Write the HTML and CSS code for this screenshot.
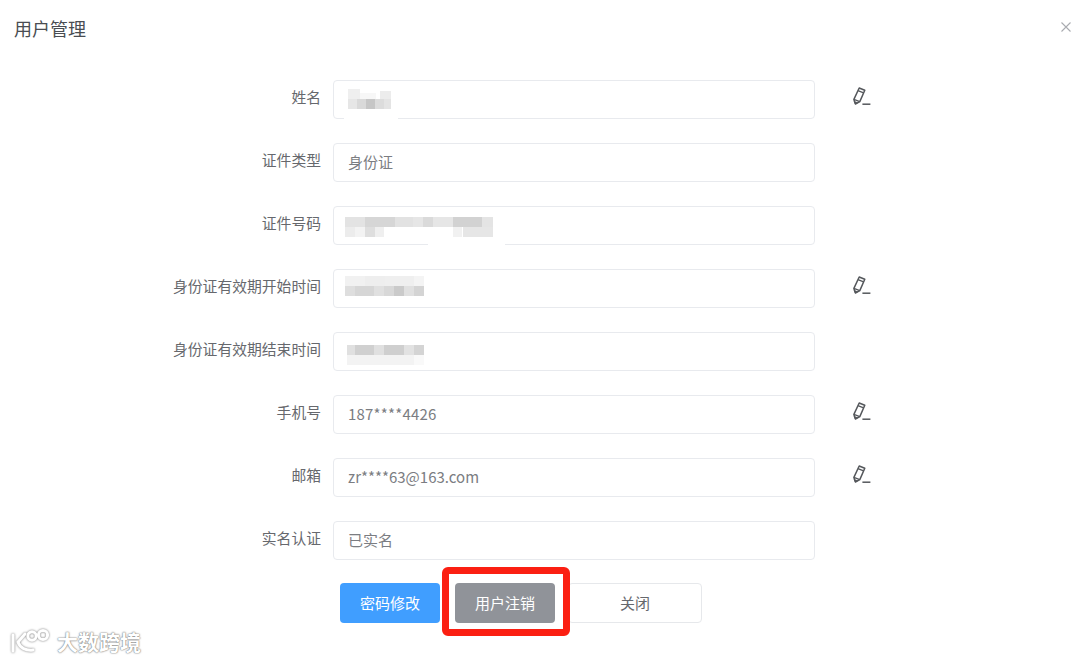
FILE: index.html
```html
<!DOCTYPE html>
<html lang="zh-CN">
<head>
  <meta charset="UTF-8">
  <meta name="viewport" content="width=device-width, initial-scale=1.0">
  <title>用户管理</title>
  <link rel="stylesheet" href="styles.css">
</head>
<body>
  <svg class="icon-defs" width="0" height="0">
    <symbol id="pencil" viewBox="0 0 18 19">
      <path d="M6.2 1 11.8 3.3 6.8 14.6 2.4 17 .9 12.4Z" fill="none" stroke="#55585c" stroke-width="1.5" stroke-linejoin="round"/>
      <path d="M5 3.6 10.6 5.9M.9 12.4 6.8 14.6" fill="none" stroke="#55585c" stroke-width="1.2"/>
      <path d="M1.2 14.6 2.4 17 4.6 15.8Z" fill="#55585c" stroke="#55585c" stroke-width=".8"/>
      <path d="M9.4 17.2h8" stroke="#55585c" stroke-width="1.5"/>
    </symbol>
  </svg>

  <div class="dialog">
    <div class="dialog-header">
      <span class="dialog-title">用户管理</span>
      <svg class="close" width="10" height="10" viewBox="0 0 10 10">
        <path d="M.5.5l9 9M9.5.5l-9 9" stroke="#a9abb0" stroke-width="1.1"/>
      </svg>
    </div>

    <div class="form">
      <div class="row">
        <label>姓名</label>
        <div class="field">
          <svg class="mosaic m-name" width="56" height="34" viewBox="0 0 56 34">
            <g fill="#efefef"><rect x="4" y="2" width="12" height="10"/><rect x="16" y="6" width="16" height="6" fill="#f7f7f7"/><rect x="36" y="4" width="11" height="8" fill="#ececec"/></g>
            <rect x="4" y="12" width="9" height="10" fill="#e6e6e6"/><rect x="13" y="12" width="9" height="10" fill="#d9d9d9"/><rect x="22" y="12" width="9" height="10" fill="#c6c6c6"/><rect x="31" y="12" width="9" height="10" fill="#dcdcdc"/><rect x="40" y="12" width="7" height="10" fill="#e4e4e4"/>
            <rect x="0" y="27" width="54" height="5" fill="#fff"/>
          </svg>
        </div>
        <svg class="edit" width="18" height="19"><use href="#pencil"/></svg>
      </div>
      <div class="row">
        <label>证件类型</label>
        <div class="field">身份证</div>
      </div>
      <div class="row">
        <label>证件号码</label>
        <div class="field">
          <svg class="mosaic m-id" width="164" height="34" viewBox="0 0 164 34">
            <rect x="0" y="0" width="20" height="10" fill="#e3e3e3"/><rect x="20" y="0" width="30" height="10" fill="#d6d6d6"/><rect x="50" y="0" width="18" height="10" fill="#e2e2e2"/><rect x="68" y="0" width="10" height="10" fill="#e6e6e6"/><rect x="78" y="0" width="10" height="10" fill="#dadada"/><rect x="88" y="0" width="20" height="10" fill="#e6e6e6"/><rect x="108" y="0" width="29" height="10" fill="#d2d2d2"/><rect x="137" y="0" width="11" height="10" fill="#e4e4e4"/>
            <rect x="0" y="10" width="10" height="10" fill="#ececec"/><rect x="10" y="10" width="10" height="10" fill="#f3f3f3"/><rect x="20" y="10" width="10" height="10" fill="#dedede"/><rect x="30" y="10" width="9" height="10" fill="#efefef"/><rect x="108" y="10" width="9" height="10" fill="#f1f1f1"/><rect x="118" y="10" width="30" height="10" fill="#e6e6e6"/>
            <rect x="83" y="27" width="77" height="4" fill="#fff"/>
          </svg>
        </div>
      </div>
      <div class="row">
        <label>身份证有效期开始时间</label>
        <div class="field">
          <svg class="mosaic m-start" width="80" height="20" viewBox="0 0 80 20">
            <rect x="0" y="0" width="20" height="10" fill="#f1f1f1"/><rect x="20" y="0" width="20" height="10" fill="#eeeeee"/><rect x="40" y="0" width="29" height="10" fill="#efefef"/><rect x="69" y="0" width="10" height="10" fill="#f4f4f4"/>
            <rect x="0" y="10" width="10" height="10" fill="#dedede"/><rect x="10" y="10" width="19" height="10" fill="#d6d6d6"/><rect x="29" y="10" width="10" height="10" fill="#e0e0e0"/><rect x="39" y="10" width="10" height="10" fill="#d8d8d8"/><rect x="49" y="10" width="10" height="10" fill="#cacaca"/><rect x="59" y="10" width="10" height="10" fill="#e0e0e0"/><rect x="69" y="10" width="10" height="10" fill="#d4d4d4"/>
          </svg>
        </div>
        <svg class="edit" width="18" height="19"><use href="#pencil"/></svg>
      </div>
      <div class="row">
        <label>身份证有效期结束时间</label>
        <div class="field">
          <svg class="mosaic m-end" width="78" height="20" viewBox="0 0 78 20">
            <rect x="0" y="0" width="8" height="10" fill="#e0e0e0"/><rect x="8" y="0" width="19" height="10" fill="#d0d0d0"/><rect x="27" y="0" width="10" height="10" fill="#e0e0e0"/><rect x="37" y="0" width="20" height="10" fill="#cfcfcf"/><rect x="57" y="0" width="10" height="10" fill="#e2e2e2"/><rect x="67" y="0" width="10" height="10" fill="#d4d4d4"/>
            <rect x="0" y="10" width="67" height="10" fill="#f3f3f3"/><rect x="67" y="10" width="10" height="10" fill="#f9f9f9"/>
          </svg>
        </div>
      </div>
      <div class="row">
        <label>手机号</label>
        <div class="field latin">187****4426</div>
        <svg class="edit" width="18" height="19"><use href="#pencil"/></svg>
      </div>
      <div class="row">
        <label>邮箱</label>
        <div class="field">zr****63@163.com</div>
        <svg class="edit" width="18" height="19"><use href="#pencil"/></svg>
      </div>
      <div class="row">
        <label>实名认证</label>
        <div class="field">已实名</div>
      </div>
    </div>

    <div class="actions">
      <button class="btn btn-primary">密码修改</button>
      <button class="btn btn-gray">用户注销</button>
      <button class="btn btn-close">关闭</button>
    </div>
  </div>

  <!-- 红框标注 -->
  <div class="highlight"></div>

  <!-- 水印 -->
  <div class="watermark">
    <svg width="46" height="26" viewBox="0 0 46 26">
      <g fill="none" stroke="#fff" stroke-width="3" stroke-linecap="round">
        <path d="M5 7v16"/>
        <path d="M17 6 10 14c2 6 8 9 15 8"/>
        <circle cx="24" cy="8" r="4.2"/>
        <circle cx="35" cy="7" r="4.6"/>
      </g>
    </svg>
    <span>大数跨境</span>
  </div>
</body>
</html>
```

FILE: styles.css
```css
* { box-sizing: border-box; }

body {
  margin: 0;
  background: #fff;
  color: #66686d;
  font-family: "Noto Sans CJK SC", "Noto Sans", sans-serif;
  font-size: 15px;
  height: 661px;
  overflow: hidden;
  position: relative;
}

.icon-defs { position: absolute; }

.dialog-header {
  height: 80px;
  padding: 15px 9px 0 14px;
  display: flex;
  justify-content: space-between;
  align-items: flex-start;
}
.dialog-title {
  font-size: 18px;
  line-height: 26px;
  color: #4a4d52;
}
.close { margin-top: 7px; }

.form {
  display: flex;
  flex-direction: column;
  gap: 24px;
}

.row {
  display: flex;
  align-items: center;
  height: 39px;
}
.row label {
  width: 321px;
  font-size: 14.8px;
  text-align: right;
  line-height: 20px;
  margin-top: -5px;
}

.field {
  position: relative;
  width: 481.5px;
  height: 39px;
  margin-left: 12px;
  padding-left: 14px;
  line-height: 36px;
  color: #7b7d82;
  border: 1px solid #e8eaee;
  border-radius: 4px;
}
.latin { letter-spacing: .2px; }

.edit { margin-left: 38.5px; margin-top: -6px; }

.mosaic { position: absolute; }
.m-name { left: 10px; top: 6px; }
.m-id { left: 11px; top: 10px; }
.m-start { left: 11px; top: 6px; }
.m-end { left: 13px; top: 12px; }

.actions {
  display: flex;
  margin-top: 23px;
  padding-left: 340px;
  gap: 15px;
}

.btn {
  height: 40px;
  width: 100px;
  font: inherit;
  border: 0;
  border-radius: 4px;
  color: #fff;
  padding: 0 0 2px;
}
.btn-primary { background: #409eff; }
.btn-gray { background: #909399; }
.btn-close {
  width: 134px;
  margin-left: -2px;
  background: #fff;
  color: #66686d;
  border: 1px solid #e6e8eb;
}

.highlight {
  position: absolute;
  left: 442px;
  top: 567px;
  width: 128px;
  height: 69px;
  border: 7px solid #fb1f12;
  border-radius: 6px;
}

.watermark {
  position: absolute;
  left: 8px;
  top: 628px;
  display: flex;
  align-items: center;
  gap: 3px;
  color: #fff;
  font-size: 21px;
  font-weight: 700;
  line-height: 26px;
  text-shadow: 0 0 2px #777, 0 0 1px #777;
}
.watermark svg { filter: drop-shadow(0 0 1px #777); }
```
